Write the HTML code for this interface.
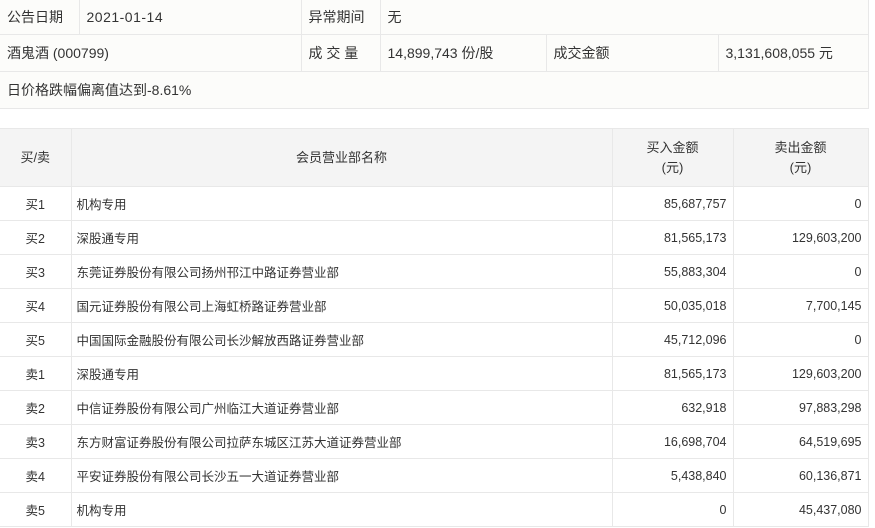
<!DOCTYPE html>
<html><head><meta charset="utf-8"><style>
*{margin:0;padding:0;box-sizing:border-box}
body{width:875px;height:528px;overflow:hidden;background:#fff;font-family:"Liberation Sans","Noto Sans CJK SC",sans-serif;color:#333}
table{border-collapse:collapse;position:absolute;left:0;table-layout:fixed}
td{border:1px solid #e8e8e8;white-space:nowrap}
.t1{top:-1px;width:868px;background:#fcfcfa;font-size:14px}
.t1 td{height:37px;padding-left:7px}
.t1 tr:first-child td{height:35px}
.t1 .n{letter-spacing:0.5px}
.t2{top:128px;width:868px;font-size:12.5px}
.t2 td{height:34px}
.t2 .h td{background:#f4f4f4;height:58px;text-align:center;font-size:13px;line-height:20px}
.c{text-align:center}.r{text-align:right;padding-right:6px}.l{padding-left:5px}
</style></head><body>
<table class="t1">
<colgroup><col style="width:79px"><col style="width:222px"><col style="width:79px"><col style="width:166px"><col style="width:172px"><col style="width:150px"></colgroup>
<tr><td style="border-left:0">公告日期</td><td class="n">2021-01-14</td><td>异常期间</td><td colspan="3">无</td></tr>
<tr><td colspan="2" style="border-left:0">酒鬼酒 (000799)</td><td>成 交 量</td><td>14,899,743 份/股</td><td>成交金额</td><td>3,131,608,055 元</td></tr>
<tr><td colspan="6" style="border-left:0">日价格跌幅偏离值达到-8.61%</td></tr>
</table>
<table class="t2">
<colgroup><col style="width:71px"><col style="width:541px"><col style="width:121px"><col style="width:135px"></colgroup>
<tr class="h"><td style="border-left:0">买/卖</td><td>会员营业部名称</td><td>买入金额<br>(元)</td><td>卖出金额<br>(元)</td></tr>
<tr><td class="c" style="border-left:0">买1</td><td class="l">机构专用</td><td class="r">85,687,757</td><td class="r">0</td></tr>
<tr><td class="c" style="border-left:0">买2</td><td class="l">深股通专用</td><td class="r">81,565,173</td><td class="r">129,603,200</td></tr>
<tr><td class="c" style="border-left:0">买3</td><td class="l">东莞证券股份有限公司扬州邗江中路证券营业部</td><td class="r">55,883,304</td><td class="r">0</td></tr>
<tr><td class="c" style="border-left:0">买4</td><td class="l">国元证券股份有限公司上海虹桥路证券营业部</td><td class="r">50,035,018</td><td class="r">7,700,145</td></tr>
<tr><td class="c" style="border-left:0">买5</td><td class="l">中国国际金融股份有限公司长沙解放西路证券营业部</td><td class="r">45,712,096</td><td class="r">0</td></tr>
<tr><td class="c" style="border-left:0">卖1</td><td class="l">深股通专用</td><td class="r">81,565,173</td><td class="r">129,603,200</td></tr>
<tr><td class="c" style="border-left:0">卖2</td><td class="l">中信证券股份有限公司广州临江大道证券营业部</td><td class="r">632,918</td><td class="r">97,883,298</td></tr>
<tr><td class="c" style="border-left:0">卖3</td><td class="l">东方财富证券股份有限公司拉萨东城区江苏大道证券营业部</td><td class="r">16,698,704</td><td class="r">64,519,695</td></tr>
<tr><td class="c" style="border-left:0">卖4</td><td class="l">平安证券股份有限公司长沙五一大道证券营业部</td><td class="r">5,438,840</td><td class="r">60,136,871</td></tr>
<tr><td class="c" style="border-left:0">卖5</td><td class="l">机构专用</td><td class="r">0</td><td class="r">45,437,080</td></tr>
</table>
</body></html>
